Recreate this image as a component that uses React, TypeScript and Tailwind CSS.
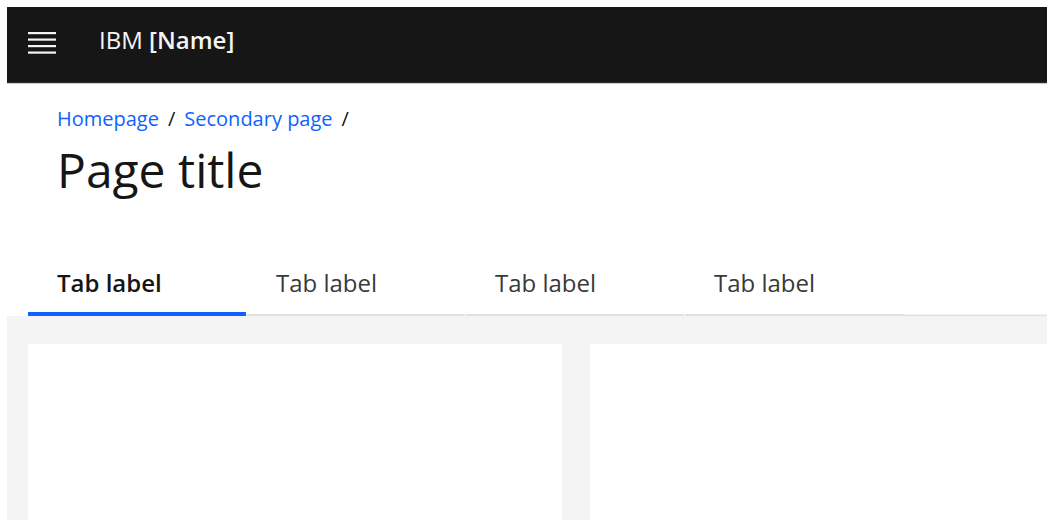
import React from "react";

const font = { fontFamily: '"Open Sans", "Noto Sans", "Liberation Sans", sans-serif' };

function Menu() {
  return (
    <svg width="28" height="22" viewBox="0 0 28 22" className="shrink-0 block">
      <rect x="0" y="0" width="28" height="2.2" fill="#f4f4f4" />
      <rect x="0" y="6.5" width="28" height="2.2" fill="#f4f4f4" />
      <rect x="0" y="13" width="28" height="2.2" fill="#f4f4f4" />
      <rect x="0" y="19.5" width="28" height="2.2" fill="#f4f4f4" />
    </svg>
  );
}

function Tab({ label, active }: { label: string; active?: boolean }) {
  return (
    <div
      className={
        "w-[218px] shrink-0 pl-[29px] pt-[18px] " +
        (active
          ? "border-b-4 border-[#0f62fe] pb-[14px] text-[#161616] font-semibold"
          : "border-b-2 border-[#e0e0e0] pb-[16px] text-[#393939] font-normal")
      }
    >
      <span className="block text-[24px] leading-[30px]">{label}</span>
    </div>
  );
}

export default function App() {
  return (
    <div className="bg-white p-[7px] w-[1054px] h-[527px] overflow-hidden" style={font}>
      <div className="h-[513px] flex flex-col overflow-hidden bg-white">
        <header className="h-[77px] shrink-0 bg-[#161616] border-b border-[#c6c6c6] flex items-start">
          <div className="h-[76px] w-full flex items-start border-b border-[#2f2f2f]">
            <div className="ml-[21px] mt-[25px]">
              <Menu />
            </div>
            <div className="ml-[43px] mt-[19px] text-[24px] leading-[28px] text-[#f4f4f4] whitespace-nowrap">
              IBM <span className="font-semibold">[Name]</span>
            </div>
          </div>
        </header>

        <div className="pl-[50px] pt-[21px] shrink-0">
          <nav className="flex items-center gap-[9px] text-[20px] leading-[28px]">
            <span className="text-[#0f62fe]">Homepage</span>
            <span className="text-[#161616]">/</span>
            <span className="text-[#0f62fe]">Secondary page</span>
            <span className="text-[#161616]">/</span>
          </nav>
          <h1 className="mt-[7px] text-[48px] leading-[60px] text-[#161616] font-normal">Page title</h1>
        </div>

        <div className="mt-[50px] flex items-end pl-[21px] shrink-0">
          <Tab label="Tab label" active />
          <div className="w-[1px] shrink-0" />
          <Tab label="Tab label" />
          <div className="w-[1px] shrink-0" />
          <Tab label="Tab label" />
          <div className="w-[1px] shrink-0" />
          <Tab label="Tab label" />
          <div className="flex-1 border-b border-[#e0e0e0] bg-[#f4f4f4] h-[2px]" />
        </div>

        <div className="flex-1 bg-[#f4f4f4] pt-[28px] pl-[21px] flex gap-[28px] overflow-hidden">
          <div className="w-[534px] shrink-0 bg-white h-[400px]" />
          <div className="w-[534px] shrink-0 bg-white h-[400px]" />
        </div>
      </div>
    </div>
  );
}
